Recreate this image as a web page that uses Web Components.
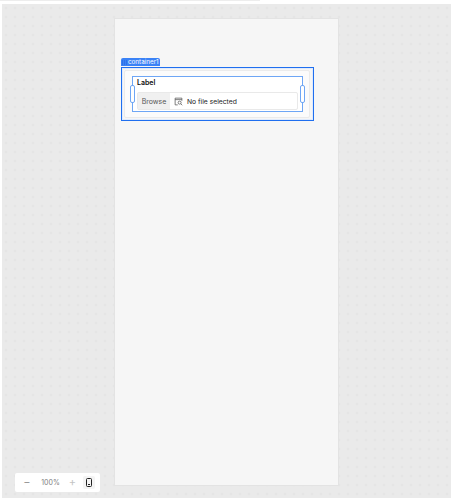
<!DOCTYPE html>
<html><head><meta charset="utf-8"><style>
html,body{margin:0;padding:0;height:100%;background:#fff;overflow:hidden}
body{font-family:Inter,"Liberation Sans",sans-serif}
</style></head><body>
<canvas-stage>
<file-frame></file-frame>
</canvas-stage>
<zoom-bar></zoom-bar>
<script>
class CanvasStage extends HTMLElement{constructor(){super();this.attachShadow({mode:'open'}).innerHTML=`<style>
:host{display:flex;flex-direction:column;box-sizing:border-box;width:451px;height:499px}
.load{height:1px;width:260px;background:#ededed;flex:none}
.gap{height:3px;flex:none}
.bg{flex:1;margin:0 0 1px 2px;display:flex;padding:14px 0 0 112px;background-color:#eaeaea;background-image:radial-gradient(circle,#dddddd .7px,transparent 1.1px);background-size:9px 9px;background-position:-.5px -.5px}
.page{width:225px;height:468px;box-sizing:border-box;background:#f6f6f6;border:1px solid #e3e3e3;padding:39px 0 0 6px}
</style><div class="load"></div><div class="gap"></div><div class="bg"><div class="page"><slot></slot></div></div>`}}
customElements.define('canvas-stage',CanvasStage);
class FileFrame extends HTMLElement{constructor(){super();this.attachShadow({mode:'open'}).innerHTML=`<style>
:host{display:block;width:193px;font-family:Inter,"Liberation Sans",sans-serif}
.tag{display:flex;align-items:center;box-sizing:border-box;width:39px;height:8px;margin-bottom:1px;background:#3b82f6;color:#fff;font-size:6.3px;line-height:8px;border-radius:2px 2px 0 0;padding-left:1px;white-space:nowrap}
.tag svg{width:5px;height:5px;margin:0 1px 0 0;flex:none}
.outer{box-sizing:border-box;height:54px;border:1px solid #1f6fef;padding:2px 3px 2px 2px;box-shadow:inset 0 0 0 1px #dfeafc}
.card{box-sizing:border-box;height:48px;border-radius:2px;background:#fbfbfb;border:1px solid #ebebeb;padding:5px 6px 0 7px}
.sel{box-sizing:border-box;height:36px;border:1px solid #6ea6f5;background:#fff;padding:0 4px;position:relative}
.label{font-size:7px;font-weight:600;color:#111;line-height:11px}
.field{margin-top:4px;height:18px;box-sizing:border-box;border:1px solid #e9e9e9;border-radius:2px;display:flex;align-items:center;font-size:6.75px;color:#222;background:#fff}
.btn{background:#f0f0f0;color:#555;height:100%;width:32px;display:flex;align-items:center;justify-content:center;flex:none;font-size:7px}
.field svg{width:9px;height:9px;margin:0 4px;flex:none}
.h{position:absolute;top:8px;width:3px;height:16px;background:#fff;border:1px solid #6ea6f5;border-radius:2px}
.h.l{left:-3px}.h.r{right:-3px}
</style><span class="tag"><svg viewBox="0 0 5 5" fill="#2f72e6"><path d="M0 0h1v5H0zM2 0h1v5H2zM4 0h1v5H4z"/></svg><span>container1</span></span><div class="outer"><div class="card"><div class="sel"><div class="label">Label</div><div class="field"><span class="btn">Browse</span><svg viewBox="0 0 12 12" fill="none" stroke="#555" stroke-width="1"><path d="M5 10.5H1.5v-9h9V5M1.5 3.5h9"/><circle cx="7.5" cy="7.5" r="2"/><path d="M9 9l2 2"/></svg><span>No file selected</span></div><i class="h l"></i><i class="h r"></i></div></div></div>`}}
customElements.define('file-frame',FileFrame);
class ZoomBar extends HTMLElement{constructor(){super();this.attachShadow({mode:'open'}).innerHTML=`<style>
:host{position:absolute;left:15px;top:473px;width:85px;height:19px;background:#fff;border-radius:2px;display:flex;align-items:center;font-family:Inter,"Liberation Sans",sans-serif;font-size:7px;color:#808080}
.b{text-align:center;font-size:11px;line-height:19px;color:#999}
.m{width:24px}.p{width:23px;text-align:center}.a{width:21px;color:#c4c4c4}
.d{width:12px;height:13px;background:#f4f4f4;border-radius:2px;display:flex;align-items:center;justify-content:center}
svg{width:6px;height:9px}
</style><span class="b m">−</span><span class="p">100%</span><span class="b a">+</span><span class="d"><svg viewBox="0 0 6 9" fill="none" stroke="#222" stroke-width="1"><rect x=".5" y=".5" width="5" height="8" rx="1"/><path d="M2 6.5h2"/></svg></span>`}}
customElements.define('zoom-bar',ZoomBar);
</script></body></html>
